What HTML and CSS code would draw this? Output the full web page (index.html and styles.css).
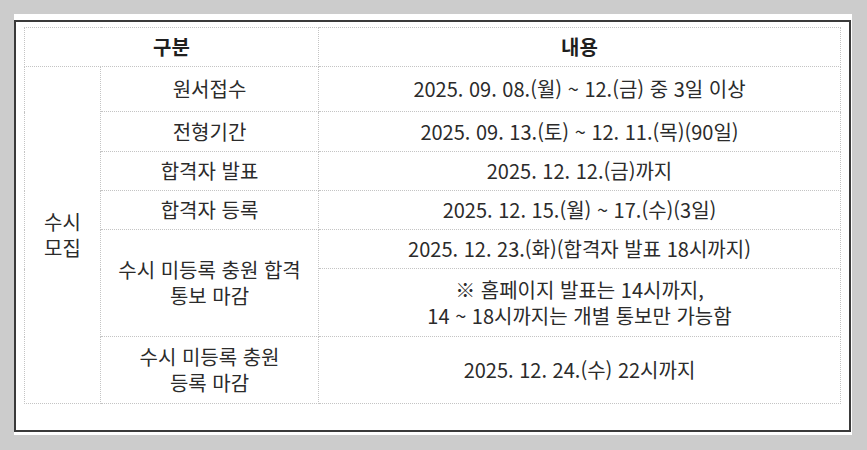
FILE: index.html
```html
<!DOCTYPE html>
<html lang="ko">
<head>
<meta charset="utf-8">
<link rel="stylesheet" href="styles.css">
</head>
<body>
<div class="frame">
  <div class="box">
    <table class="sched">
      <colgroup>
        <col class="c1"><col class="c2"><col class="c3">
      </colgroup>
      <thead>
        <tr class="r-head"><th colspan="2">구분</th><th>내용</th></tr>
      </thead>
      <tbody>
        <tr class="r-first"><td rowspan="7">수시<br>모집</td><td>원서접수</td><td>2025. 09. 08.(월) ~ 12.(금) 중 3일 이상</td></tr>
        <tr class="r-a"><td>전형기간</td><td>2025. 09. 13.(토) ~ 12. 11.(목)(90일)</td></tr>
        <tr class="r-b"><td>합격자 발표</td><td>2025. 12. 12.(금)까지</td></tr>
        <tr class="r-b"><td>합격자 등록</td><td>2025. 12. 15.(월) ~ 17.(수)(3일)</td></tr>
        <tr class="r-b"><td rowspan="2">수시 미등록 충원 합격<br>통보 마감</td><td>2025. 12. 23.(화)(합격자 발표 18시까지)</td></tr>
        <tr class="r-tall"><td>※ 홈페이지 발표는 14시까지,<br>14 ~ 18시까지는 개별 통보만 가능함</td></tr>
        <tr class="r-last"><td>수시 미등록 충원<br>등록 마감</td><td>2025. 12. 24.(수) 22시까지</td></tr>
      </tbody>
    </table>
  </div>
</div>
</body>
</html>
```

FILE: styles.css
```css
html, body {
  margin: 0;
  padding: 0;
}
body {
  background: #cccccc;
  padding: 14px;
  font-family: "Noto Sans CJK KR", "Noto Sans", sans-serif;
  color: #2b2b2b;
}
.frame {
  width: 838px;
  height: 421px;
  box-sizing: border-box;
  background: #ffffff;
  padding: 6px 1px 3px 0;
}
.box {
  height: 412px;
  box-sizing: border-box;
  border: 2px solid #3a3a3a;
  padding: 5px 8px 0 8px;
}
.sched {
  width: 817px;
  table-layout: fixed;
  border-collapse: collapse;
  font-size: 20px;
  line-height: 26px;
}
.c1 { width: 76px; }
.c2 { width: 218px; }
.c3 { width: 522px; }
.sched th, .sched td {
  border: 1px dotted #c4c4c4;
  text-align: center;
  vertical-align: middle;
  padding: 0;
}
.sched th {
  font-weight: 700;
  color: #1f1f1f;
}
.r-head { height: 39px; }
.r-first { height: 45px; }
.r-a { height: 40px; }
.r-b { height: 39px; }
.r-tall { height: 68px; }
.r-last { height: 67px; }
```
